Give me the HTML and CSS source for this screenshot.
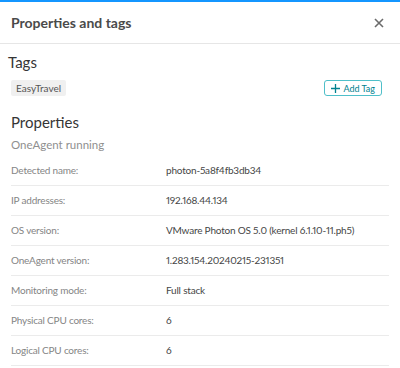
FILE: index.html
```html
<!DOCTYPE html>
<html lang="en">

<head>
    <meta charset="UTF-8">
    <meta name="viewport" content="width=device-width, initial-scale=1.0">
    <title>Properties and tags</title>
    <link rel="stylesheet" href="styles.css">
</head>

<body>
    <div class="panel">
        <div class="header">
            <h1>Properties and tags</h1>
            <button class="close" aria-label="Close">
                <svg width="10" height="10" viewBox="0 0 10 10">
                    <path d="M1 1L9 9M9 1L1 9" stroke="#6b6b6b" stroke-width="1.6" fill="none" />
                </svg>
            </button>
        </div>

        <div class="content">
            <h2 class="tags-title">Tags</h2>
            <div class="tags">
                <span class="chip">EasyTravel</span>
                <button class="addtag">
                    <svg width="9" height="9" viewBox="0 0 9 9">
                        <path d="M4.5 0V9M0 4.5H9" stroke="#00818f" stroke-width="1.3" fill="none" />
                    </svg>
                    Add Tag
                </button>
            </div>

            <h2>Properties</h2>
            <h3>OneAgent running</h3>

            <table>
                <tbody>
                    <tr><td>Detected name:</td><td>photon-5a8f4fb3db34</td></tr>
                    <tr><td>IP addresses:</td><td>192.168.44.134</td></tr>
                    <tr><td>OS version:</td><td>VMware Photon OS 5.0 (kernel 6.1.10-11.ph5)</td></tr>
                    <tr><td>OneAgent version:</td><td>1.283.154.20240215-231351</td></tr>
                    <tr><td>Monitoring mode:</td><td>Full stack</td></tr>
                    <tr><td>Physical CPU cores:</td><td>6</td></tr>
                    <tr><td>Logical CPU cores:</td><td>6</td></tr>
                </tbody>
            </table>
        </div>
    </div>
</body>

</html>
```

FILE: styles.css
```css
* {
    margin: 0;
    padding: 0;
    box-sizing: border-box;
}

body {
    font-family: Lato, "Open Sans", sans-serif;
    color: #454646;
    background: #fff;
}

.panel {
    border-top: 2px solid #1496ff;
    width: 400px;
}

.header {
    display: flex;
    align-items: center;
    justify-content: space-between;
    height: 42px;
    padding: 0 16px 0 11px;
    border-bottom: 1px solid #e6e6e6;
}

h1 {
    font-size: 14px;
    font-weight: 700;
    color: #4a4a4a;
}

.close {
    border: none;
    background: none;
    display: flex;
}

.content {
    padding: 8px 11px 0 11px;
}

h2 {
    font-size: 15px;
    font-weight: 400;
    color: #353535;
    line-height: 20px;
}

.tags-title {
    margin-left: -3px;
}

.tags {
    display: flex;
    justify-content: space-between;
    align-items: center;
    margin: 8px 7px 16px 0;
}

.chip {
    background: #f0f0f0;
    font-size: 10px;
    color: #555;
    padding: 0 5px;
    height: 16px;
    line-height: 16px;
    border-radius: 2px;
}

.addtag {
    display: flex;
    align-items: center;
    gap: 3px;
    height: 16px;
    padding: 0 6px;
    border: 1px solid #4fbfc9;
    border-radius: 3px;
    background: #fff;
    color: #00818f;
    font-family: inherit;
    font-size: 9px;
}

h3 {
    font-size: 11.5px;
    font-weight: 400;
    color: #8f8f8f;
    margin: 5px 0 2px 0;
    line-height: 16px;
}

table {
    width: 100%;
    border-collapse: collapse;
}

tr {
    border-bottom: 1px solid #ebebeb;
}

td {
    height: 30px;
    font-size: 10px;
    letter-spacing: -0.2px;
    font-variant-numeric: proportional-nums;
    color: #454646;
    vertical-align: middle;
}

td:first-child {
    width: 155px;
    color: #858585;
}
```
